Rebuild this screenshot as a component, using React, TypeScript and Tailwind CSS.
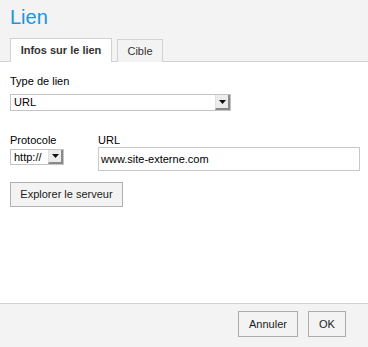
import React from 'react';

// Small native-looking select arrow (old Mac/Win style)
function SelectArrow() {
  return (
    <span className="flex h-full w-[15px] items-center justify-center border-r-2 border-b-2 border-r-[#8a8a8a] border-b-[#8a8a8a] border-l border-l-[#e0e0e0] bg-[#ececec]">
      <svg width="7" height="4" viewBox="0 0 7 4">
        <path d="M0 0h7L3.5 4z" fill="#111" />
      </svg>
    </span>
  );
}

function FakeSelect({ value, className }: { value: string; className: string }) {
  return (
    <div className={`flex items-stretch border border-[#c4c4c4] bg-white ${className}`}>
      <span className="flex flex-1 items-center pl-[3px] text-[11px] text-black">{value}</span>
      <SelectArrow />
    </div>
  );
}

export default function App() {
  return (
    <div
      className="flex h-[347px] w-[368px] flex-col bg-white text-[#222]"
      style={{ fontFamily: '"Liberation Sans", Arial, sans-serif' }}
    >
      {/* Header with title and tabs */}
      <div className="border-b border-[#d2d2d2] bg-[#f3f3f3] px-[10px] pt-[6px]">
        <h1 className="text-[20px] leading-[22px] text-[#1a95de]">Lien</h1>
        <div className="mt-[10px] -mb-px flex items-end gap-[5px]">
          <div className="flex h-[24px] w-[102px] items-center justify-center border border-b-0 border-[#d2d2d2] bg-white text-[11px] font-bold text-[#333]">
            Infos sur le lien
          </div>
          <div className="flex h-[23px] w-[46px] items-center justify-center border border-b-0 border-[#d2d2d2] bg-[#f3f3f3] text-[11px] text-[#333]">
            Cible
          </div>
        </div>
      </div>

      {/* Body */}
      <div className="flex-1 px-[10px] pt-[13px]">
        <label className="block text-[11px] leading-[13px] text-black">Type de lien</label>
        <FakeSelect value="URL" className="mt-[6px] h-[17px] w-[221px]" />

        <div className="mt-[23px] flex gap-[34px]">
          <div>
            <label className="block text-[11px] leading-[13px] text-black">Protocole</label>
            <FakeSelect value="http://" className="mt-[2px] h-[16px] w-[54px]" />
          </div>
          <div className="flex-1">
            <label className="block text-[11px] leading-[13px] text-black">URL</label>
            <div className="flex h-[24px] w-[262px] items-center border border-[#c8c8c8] bg-white pl-[2px] text-[11px] text-black">
              www.site-externe.com
            </div>
          </div>
        </div>

        <button className="mt-[11px] flex h-[25px] w-[113px] items-center justify-center border border-[#b0b0b0] bg-[#f3f3f3] text-[11px] text-[#222]">
          Explorer le serveur
        </button>
      </div>

      {/* Footer */}
      <div className="flex h-[44px] items-start justify-end gap-[10px] border-t border-[#d2d2d2] bg-[#f3f3f3] pt-[7px] pr-[22px]">
        <button className="flex h-[26px] w-[60px] items-center justify-center border border-[#acacac] bg-[#f3f3f3] text-[11px] text-[#222]">
          Annuler
        </button>
        <button className="flex h-[26px] w-[38px] items-center justify-center border border-[#acacac] bg-[#f3f3f3] text-[11px] text-[#222]">
          OK
        </button>
      </div>
    </div>
  );
}
